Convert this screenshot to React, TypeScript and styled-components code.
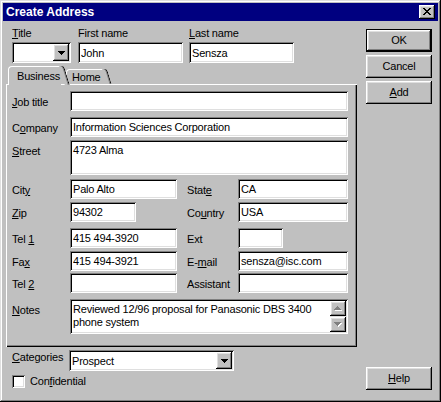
import React from 'react'
import styled, { createGlobalStyle } from 'styled-components'

const GlobalStyle = createGlobalStyle`
  html, body { margin: 0; padding: 0; background: #c0c0c0; }
  body {
    font-family: 'Liberation Sans', Arial, sans-serif;
    font-size: 11px;
    letter-spacing: -0.2px;
    color: #000;
  }
  * { box-sizing: border-box; }
`

const raised = `
  box-shadow: inset -1px -1px #000, inset 1px 1px #fff, inset -2px -2px #808080, inset 2px 2px #dfdfdf;
`
const sunken = `
  box-shadow: inset 1px 1px #808080, inset -1px -1px #fff, inset 2px 2px #000, inset -2px -2px #dfdfdf;
`

const Window = styled.div`
  width: 441px;
  height: 402px;
  padding: 3px;
  background: #c0c0c0;
  display: flex;
  flex-direction: column;
  box-shadow: inset -1px -1px #000, inset 1px 1px #dfdfdf, inset -2px -2px #808080, inset 2px 2px #fff;
`

const TitleBar = styled.div`
  height: 18px;
  flex: none;
  background: #000080;
  color: #fff;
  display: flex;
  align-items: center;
  justify-content: space-between;
  padding: 0 3px 0 3px;
  font-weight: bold;
  font-size: 12px;
  letter-spacing: 0;
  line-height: 13px;
`

const CloseBtn = styled.span`
  width: 16px;
  height: 14px;
  background: #c0c0c0;
  display: flex;
  align-items: center;
  justify-content: center;
  padding: 0 1px 1px 0;
  ${raised}
`

const Body = styled.div`
  flex: 1;
  display: flex;
  gap: 9px;
  padding: 0 3px 9px 3px;
`

const LeftCol = styled.div`
  width: 351px;
  display: flex;
  flex-direction: column;
`

const RightCol = styled.div`
  width: 66px;
  display: flex;
  flex-direction: column;
  gap: 3px;
  padding-top: 8px;
`

const Button = styled.button<{ $default?: boolean; $push?: boolean }>`
  width: 66px;
  height: 23px;
  padding: 0;
  margin: ${p => (p.$push ? 'auto 0 0' : '0')};
  font: inherit;
  letter-spacing: inherit;
  line-height: 13px;
  color: #000;
  background: #c0c0c0;
  border: ${p => (p.$default ? '1px solid #000' : 'none')};
  ${raised}
`

const Key = styled.span`
  text-decoration: underline;
`

const NameRow = styled.div`
  display: grid;
  grid-template-columns: 66px 111px 105px;
  margin-top: 6px;
  padding-left: 6px;
`

const NameField = styled.div`
  display: flex;
  flex-direction: column;
  gap: 2px;
`

const TopLabel = styled.span`
  line-height: 13px;
`

const NameInput = styled.input`
  width: 105px;
  height: 21px;
  border: 0;
  margin: 0;
  padding: 0 3px;
  background: #fff;
  font: inherit;
  letter-spacing: inherit;
  line-height: 13px;
  outline: none;
  ${sunken}
`

const Combo = styled.div<{ $w: number }>`
  width: ${p => p.$w}px;
  height: 21px;
  padding: 2px;
  background: #fff;
  display: flex;
  ${sunken}
`

const ComboText = styled.span`
  flex: 1;
  padding: 3px 1px 0;
  line-height: 13px;
`

const DropBtn = styled.span`
  width: 16px;
  background: #c0c0c0;
  display: flex;
  align-items: center;
  justify-content: center;
  ${raised}
`

const Tabs = styled.div`
  height: 20px;
  margin-top: 1px;
  padding-left: 2px;
  display: flex;
  align-items: flex-end;
  position: relative;
  z-index: 1;
`

const Tab = styled.div<{ $active?: boolean; $w: number; $pl: number }>`
  position: relative;
  width: ${p => p.$w}px;
  height: ${p => (p.$active ? 19 : 15)}px;
  margin: 0 5px ${p => (p.$active ? -1 : 0)}px 0;
  padding: ${p => (p.$active ? 3 : 1)}px 0 0 ${p => p.$pl}px;
  line-height: 13px;
  background: #c0c0c0;
  border-left: 1px solid #fff;
  border-top: 1px solid #fff;
  border-top-left-radius: 4px;
  z-index: ${p => (p.$active ? 2 : 1)};
  &::after {
    content: '';
    position: absolute;
    top: -1px;
    bottom: 0;
    right: -3px;
    width: 4px;
    background: #c0c0c0;
    border-right: 1px solid #000;
    box-shadow: inset -1px 0 #808080;
    border-top-right-radius: 3px;
    transform: skewX(17deg);
    transform-origin: top;
  }
`

const Panel = styled.div`
  height: 263px;
  padding: 7px 8px 0 6px;
  position: relative;
  box-shadow: inset 1px 1px #fff, inset -1px -1px #000, inset -2px -2px #808080;
`

const Row = styled.div<{ $h?: number; $mt?: number }>`
  display: grid;
  grid-template-columns: 58px 107px 10px 51px 110px;
  height: ${p => p.$h ?? 20}px;
  margin-top: ${p => p.$mt ?? 3}px;
`

const Label = styled.span<{ $col?: number }>`
  grid-column: ${p => p.$col ?? 1};
  padding-top: 5px;
  line-height: 13px;
  white-space: nowrap;
`

const Edit = styled.input<{ $col?: string; $w?: number }>`
  grid-column: ${p => p.$col ?? 'auto'};
  width: ${p => (p.$w ? `${p.$w}px` : '100%')};
  height: 100%;
  border: 0;
  margin: 0;
  padding: 0 3px;
  background: #fff;
  font: inherit;
  letter-spacing: inherit;
  line-height: 13px;
  outline: none;
  ${sunken}
`

const Memo = styled.textarea`
  grid-column: 2 / -1;
  height: 100%;
  border: 0;
  margin: 0;
  padding: 4px 3px 0;
  background: #fff;
  font: inherit;
  letter-spacing: inherit;
  line-height: 13px;
  resize: none;
  overflow: hidden;
  outline: none;
  ${sunken}
`

const NotesBox = styled.div`
  grid-column: 2 / -1;
  display: flex;
  padding: 2px;
  background: #fff;
  ${sunken}
`

const NotesText = styled.textarea`
  flex: 1;
  border: 0;
  margin: 0;
  padding: 2px 1px 0;
  background: transparent;
  font: inherit;
  letter-spacing: inherit;
  line-height: 13px;
  resize: none;
  overflow: hidden;
  outline: none;
`

const ScrollCol = styled.div`
  width: 16px;
  display: flex;
  flex-direction: column;
  gap: 1px;
  background: #e0e0e0;
`

const ScrollBtn = styled.span`
  flex: 1;
  background: #c0c0c0;
  display: flex;
  align-items: center;
  justify-content: center;
  ${raised}
`

const BottomRow = styled.div<{ $mt: number }>`
  display: flex;
  align-items: flex-start;
  margin-top: ${p => p.$mt}px;
  padding-left: 6px;
`

const BottomLabel = styled.span`
  width: 57px;
  padding-top: 1px;
  line-height: 13px;
`

const CheckRow = styled.label`
  display: flex;
  align-items: center;
  gap: 5px;
  height: 14px;
  margin-top: 3px;
  padding-left: 6px;
  line-height: 13px;
`

const CheckBox = styled.span`
  width: 13px;
  height: 13px;
  background: #fff;
  ${sunken}
`

const DownArrow = ({ color = '#000' }: { color?: string }) => (
  <svg width="7" height="4" viewBox="0 0 7 4" shapeRendering="crispEdges">
    <path d="M0 0h7v1h-1v1h-1v1h-1v1h-1v-1h-1v-1h-1v-1h-1z" fill={color} />
  </svg>
)

const GrayArrow = ({ up }: { up?: boolean }) => {
  const d = up
    ? 'M3 0h1v1h1v1h1v1h1v1h-7v-1h1v-1h1v-1h1z'
    : 'M0 0h7v1h-1v1h-1v1h-1v1h-1v-1h-1v-1h-1v-1h-1z'
  return (
    <svg width="8" height="5" viewBox="0 0 8 5" shapeRendering="crispEdges">
      <path d={d} fill="#fff" transform="translate(1 1)" />
      <path d={d} fill="#808080" />
    </svg>
  )
}

const CloseGlyph = () => (
  <svg width="8" height="7" viewBox="0 0 8 7" shapeRendering="crispEdges">
    <path
      d="M0 0h2v1h-2zM6 0h2v1h-2zM1 1h2v1h-2zM5 1h2v1h-2zM2 2h4v1h-4zM3 3h2v1h-2zM2 4h4v1h-4zM1 5h2v1h-2zM5 5h2v1h-2zM0 6h2v1h-2zM6 6h2v1h-2z"
      fill="#000"
    />
  </svg>
)

export default function App() {
  return (
    <>
      <GlobalStyle />
      <Window>
        <TitleBar>
          <span>Create Address</span>
          <CloseBtn>
            <CloseGlyph />
          </CloseBtn>
        </TitleBar>
        <Body>
          <LeftCol>
            <NameRow>
              <NameField>
                <TopLabel>
                  <Key>T</Key>itle
                </TopLabel>
                <Combo $w={59}>
                  <ComboText />
                  <DropBtn>
                    <DownArrow />
                  </DropBtn>
                </Combo>
              </NameField>
              <NameField>
                <TopLabel>First name</TopLabel>
                <NameInput readOnly value="John" />
              </NameField>
              <NameField>
                <TopLabel>
                  <Key>L</Key>ast name
                </TopLabel>
                <NameInput readOnly value="Sensza" />
              </NameField>
            </NameRow>

            <Tabs>
              <Tab $active $w={53} $pl={8}>
                Business
              </Tab>
              <Tab $w={38} $pl={5}>
                Home
              </Tab>
            </Tabs>

            <Panel>
              <Row $mt={0}>
                <Label>
                  <Key>J</Key>ob title
                </Label>
                <Edit $col="2 / -1" readOnly value="" />
              </Row>
              <Row $mt={6}>
                <Label>
                  C<Key>o</Key>mpany
                </Label>
                <Edit $col="2 / -1" readOnly value="Information Sciences Corporation" />
              </Row>
              <Row $h={35} $mt={3}>
                <Label>
                  <Key>S</Key>treet
                </Label>
                <Memo readOnly value="4723 Alma" />
              </Row>
              <Row $mt={4}>
                <Label>
                  Cit<Key>y</Key>
                </Label>
                <Edit readOnly value="Palo Alto" />
                <Label $col={4}>
                  Stat<Key>e</Key>
                </Label>
                <Edit readOnly value="CA" />
              </Row>
              <Row $mt={3}>
                <Label>
                  <Key>Z</Key>ip
                </Label>
                <Edit $w={66} readOnly value="94302" />
                <Label $col={4}>
                  Co<Key>u</Key>ntry
                </Label>
                <Edit readOnly value="USA" />
              </Row>
              <Row $mt={6}>
                <Label>
                  Tel <Key>1</Key>
                </Label>
                <Edit readOnly value="415 494-3920" />
                <Label $col={4}>Ext</Label>
                <Edit $w={45} readOnly value="" />
              </Row>
              <Row $mt={3}>
                <Label>
                  Fa<Key>x</Key>
                </Label>
                <Edit readOnly value="415 494-3921" />
                <Label $col={4}>
                  E-<Key>m</Key>ail
                </Label>
                <Edit readOnly value="sensza@isc.com" />
              </Row>
              <Row $mt={2}>
                <Label>
                  Tel <Key>2</Key>
                </Label>
                <Edit readOnly value="" />
                <Label $col={4}>Assistant</Label>
                <Edit readOnly value="" />
              </Row>
              <Row $h={35} $mt={6}>
                <Label>
                  <Key>N</Key>otes
                </Label>
                <NotesBox>
                  <NotesText
                    readOnly
                    value="Reviewed 12/96 proposal for Panasonic DBS 3400 phone system"
                  />
                  <ScrollCol>
                    <ScrollBtn>
                      <GrayArrow up />
                    </ScrollBtn>
                    <ScrollBtn>
                      <GrayArrow />
                    </ScrollBtn>
                  </ScrollCol>
                </NotesBox>
              </Row>
            </Panel>

            <BottomRow $mt={3}>
              <BottomLabel>
                <Key>C</Key>ategories
              </BottomLabel>
              <Combo $w={165}>
                <ComboText>Prospect</ComboText>
                <DropBtn>
                  <DownArrow />
                </DropBtn>
              </Combo>
            </BottomRow>
            <CheckRow>
              <CheckBox />
              <span>
                Con<Key>f</Key>idential
              </span>
            </CheckRow>
          </LeftCol>

          <RightCol>
            <Button $default>OK</Button>
            <Button>Cancel</Button>
            <Button>
              <Key>A</Key>dd
            </Button>
            <Button $push>
              <Key>H</Key>elp
            </Button>
          </RightCol>
        </Body>
      </Window>
    </>
  )
}
